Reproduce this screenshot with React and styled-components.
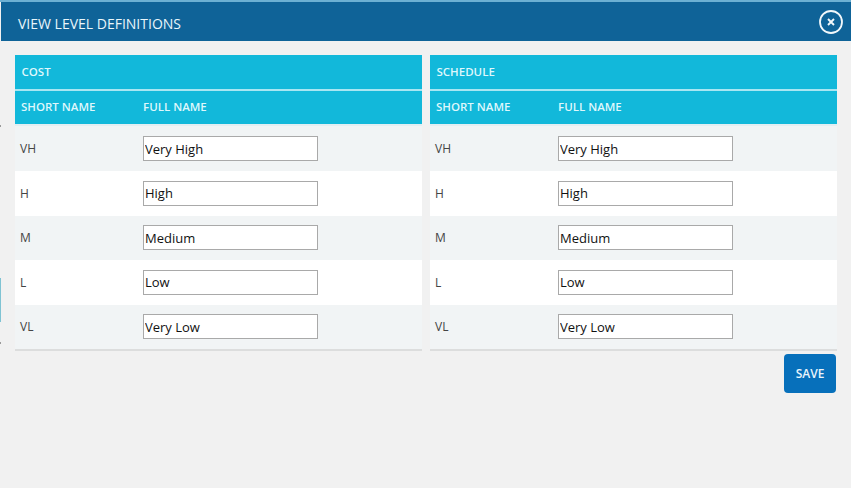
import React from 'react';
import styled, { createGlobalStyle } from 'styled-components';

const GlobalStyle = createGlobalStyle`
  html, body { margin: 0; padding: 0; height: 100%; background: #f1f1f1; overflow: hidden; }
  body { font-family: "Open Sans", "Liberation Sans", sans-serif; }
`;

const Page = styled.div`
  width: 851px;
  height: 488px;
  padding-top: 2px;
  box-sizing: border-box;
  background: #f1f1f1;
  position: relative;
  &::before {
    content: '';
    position: absolute;
    left: 0;
    top: 0;
    right: 0;
    height: 2px;
    background: #6cb0d3;
  }
`;

// bits of the page behind the dialog that peek out at its left edge
const BehindSliver = styled.i`
  position: absolute;
  left: 0;
  top: ${({ $top }) => $top}px;
  width: 1px;
  height: ${({ $height }) => $height}px;
  background: ${({ $color }) => $color};
`;

const Header = styled.div`
  height: 39px;
  margin-left: 1px;
  padding: 0 7px 0 17px;
  display: flex;
  align-items: center;
  justify-content: space-between;
  background: #0f6398;
`;

const Title = styled.h1`
  margin: 0;
  padding-top: 4px;
  font-size: 14px;
  font-weight: 400;
  color: #e9f6fb;
`;

const CloseButton = styled.button`
  width: 26px;
  height: 26px;
  padding: 0;
  margin-top: 1px;
  border: 0;
  background: none;
  display: block;
`;

const Body = styled.div`
  padding: 14px 14px 0 15px;
`;

const Panels = styled.div`
  display: grid;
  grid-template-columns: 407px 407px;
  column-gap: 8px;
`;

const Panel = styled.section`
  border-bottom: 2px solid #dcdddd;
  background: #f1f4f5;
`;

const PanelTitle = styled.div`
  height: 32px;
  padding: 0 0 2px 6.5px;
  display: flex;
  align-items: center;
  background: #12b8da;
  border-bottom: 2px solid #a8e6f2;
  font-size: 11.5px;
  font-weight: 600;
  color: #dff7fc;
`;

const ColumnHeader = styled.div`
  height: 31px;
  padding-bottom: 2px;
  display: grid;
  grid-template-columns: 128px 1fr;
  align-items: center;
  background: #12b8da;
  border-bottom: 2px solid #e2eef2;
  font-size: 11.5px;
  font-weight: 600;
  color: #dff7fc;
`;

const ShortHead = styled.span`
  padding-left: 6px;
`;

const Row = styled.div`
  height: 44.5px;
  display: grid;
  grid-template-columns: 128px 1fr;
  align-items: center;
  background: ${({ $odd }) => ($odd ? '#f1f4f5' : '#ffffff')};
  ${ColumnHeader} + & {
    height: 45px;
  }
`;

const ShortName = styled.span`
  padding-left: 5px;
  font-size: 12px;
  color: #444;
`;

const NameInput = styled.input`
  box-sizing: border-box;
  width: 175px;
  height: 25px;
  padding: 0 1px;
  border: 1px solid #a9a9a9;
  background: #fff;
  font-family: "Open Sans", "Liberation Sans", sans-serif;
  font-size: 13px;
  color: #111;
  outline: none;
`;

const Actions = styled.div`
  display: flex;
  justify-content: flex-end;
  padding: 3px 1px 0 0;
`;

const SaveButton = styled.button`
  width: 52px;
  height: 39px;
  padding: 0;
  border: 0;
  border-radius: 4px;
  background: #0770bb;
  font-family: "Open Sans", "Liberation Sans", sans-serif;
  font-size: 12px;
  font-weight: 600;
  color: #e9f4fb;
`;

const levels = [
  ['VH', 'Very High'],
  ['H', 'High'],
  ['M', 'Medium'],
  ['L', 'Low'],
  ['VL', 'Very Low'],
];

const LevelPanel = ({ title }) => (
  <Panel>
    <PanelTitle>{title}</PanelTitle>
    <ColumnHeader>
      <ShortHead>SHORT NAME</ShortHead>
      <span>FULL NAME</span>
    </ColumnHeader>
    {levels.map(([short, full], i) => (
      <Row key={short} $odd={i % 2 === 0}>
        <ShortName>{short}</ShortName>
        <NameInput defaultValue={full} />
      </Row>
    ))}
  </Panel>
);

const App = () => (
  <Page>
    <GlobalStyle />
    <BehindSliver $top={125} $height={2} $color="#9a9a9a" />
    <BehindSliver $top={278} $height={44} $color="#7fc3d3" />
    <BehindSliver $top={342} $height={2} $color="#9a9a9a" />
    <Header>
      <Title>VIEW LEVEL DEFINITIONS</Title>
      <CloseButton aria-label="Close">
        <svg width="26" height="26" viewBox="0 0 26 26" fill="none" stroke="#f2f8fb">
          <circle cx="13" cy="13" r="11" strokeWidth="1.8" />
          <path d="M10 10l6 6M16 10l-6 6" strokeWidth="1.9" />
        </svg>
      </CloseButton>
    </Header>
    <Body>
      <Panels>
        <LevelPanel title="COST" />
        <LevelPanel title="SCHEDULE" />
      </Panels>
      <Actions>
        <SaveButton>SAVE</SaveButton>
      </Actions>
    </Body>
  </Page>
);

export default App;
